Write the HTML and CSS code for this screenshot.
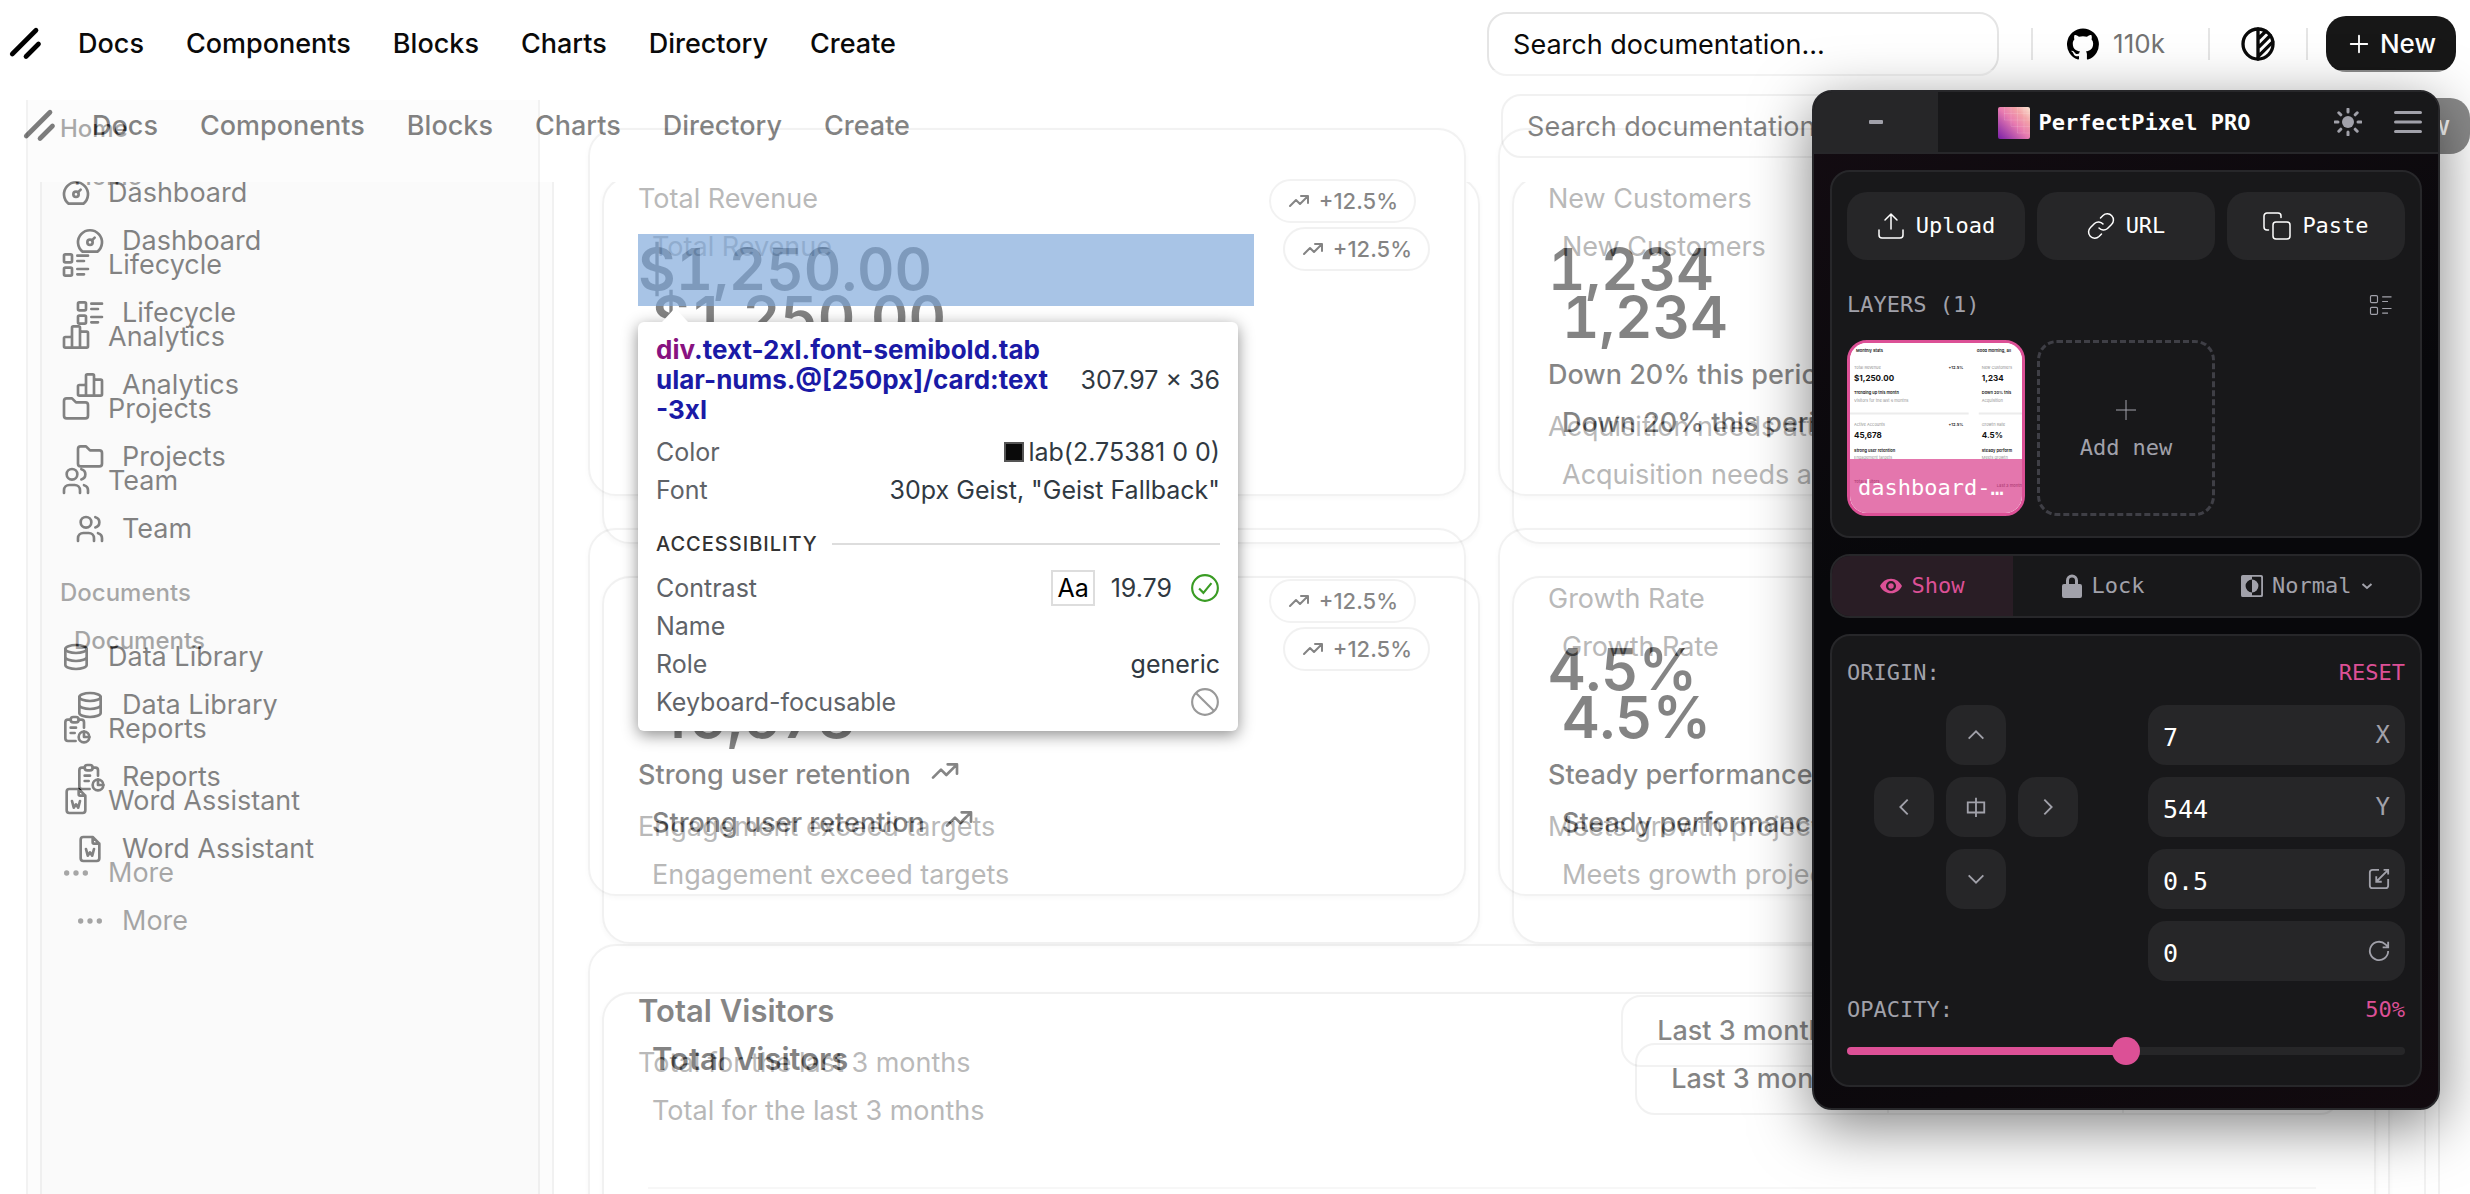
FILE: index.html
```
<!DOCTYPE html>
<html lang="en">

<head>
  <meta charset="UTF-8" />
  <meta name="viewport" content="width=device-width, initial-scale=1.0" />
  <title>PerfectPixel PRO - Dashboard</title>
  <link rel="stylesheet" href="styles.css">
</head>

<body>
  <!-- shared icons -->
  <svg class="sprite" aria-hidden="true">
    <symbol id="i-trend" viewBox="0 0 24 24">
      <path d="M3 17l6-6 4 4 8-8M14 7h7v7" />
    </symbol>
    <symbol id="i-down" viewBox="0 0 24 24">
      <path d="M3 7l6 6 4-4 8 8M21 10v7h-7" />
    </symbol>
    <symbol id="i-list" viewBox="0 0 24 24">
      <path d="M13 5h8M13 9h5M13 15h8M13 19h5" />
      <rect x="3" y="4" width="6" height="6" rx="1" />
      <rect x="3" y="14" width="6" height="6" rx="1" />
    </symbol>
    <symbol id="i-chevron" viewBox="0 0 24 24">
      <path d="M4 16l8-8 8 8" />
    </symbol>
  </svg>

  <div class="page" id="page">
    <header class="site-header">
      <a class="logo" href="#" aria-label="Home page">
        <svg viewBox="0 0 256 256">
          <path d="M208 128L128 208M192 40L40 192" />
        </svg>
      </a>
      <nav class="site-nav">
        <a href="#">Docs</a>
        <a href="#">Components</a>
        <a href="#">Blocks</a>
        <a href="#">Charts</a>
        <a href="#">Directory</a>
        <a href="#">Create</a>
      </nav>
      <input class="search" type="search" aria-label="Search documentation" placeholder="Search documentation..." />
      <span class="divider"></span>
      <a class="github" href="#">
        <svg viewBox="0 0 24 24">
          <path d="M12 .3a12 12 0 0 0-3.8 23.38c.6.12.83-.26.83-.57L9 21.07c-3.34.72-4.04-1.61-4.04-1.61-.55-1.39-1.34-1.76-1.34-1.76-1.08-.74.09-.73.09-.73 1.2.09 1.83 1.24 1.83 1.24 1.08 1.83 2.81 1.3 3.5 1 .1-.78.42-1.31.76-1.61-2.67-.3-5.47-1.33-5.47-5.93 0-1.31.47-2.38 1.24-3.22-.14-.3-.54-1.52.1-3.18 0 0 1-.32 3.3 1.23a11.5 11.5 0 0 1 6 0c2.28-1.55 3.29-1.23 3.29-1.23.64 1.66.24 2.88.12 3.18a4.65 4.65 0 0 1 1.23 3.22c0 4.61-2.8 5.63-5.48 5.92.42.36.81 1.1.81 2.22l-.01 3.29c0 .31.2.69.82.57A12 12 0 0 0 12 .3" />
        </svg>
        110k
      </a>
      <span class="divider"></span>
      <button class="theme" type="button" aria-label="Toggle theme">
        <svg class="icon" viewBox="0 0 24 24">
          <circle cx="12" cy="12" r="9" />
          <path d="M12 3v18M12 9l4.65-4.65M12 14.3l7.37-7.37M12 19.6l8.85-8.85" />
        </svg>
      </button>
      <span class="divider"></span>
      <button class="new-button" type="button">
        <svg class="icon" viewBox="0 0 24 24">
          <path d="M12 3v18M3 12h18" />
        </svg>
        New
      </button>
    </header>

    <div class="viewport">
      <div class="shell">
        <aside class="sidebar">
          <div class="group">
            <h2 class="group-label">Home</h2>
            <ul class="menu">
              <li><a href="#"><svg class="icon" viewBox="0 0 24 24">
                <circle cx="12" cy="13" r="2" />
                <path d="M13.45 11.55l2.05-2.05M6.4 20a9 9 0 1 1 11.2 0z" />
              </svg>Dashboard</a></li>
              <li><a href="#"><svg class="icon"><use href="#i-list" /></svg>Lifecycle</a></li>
              <li><a href="#"><svg class="icon" viewBox="0 0 24 24">
                <path d="M4 20h16M3 13a1 1 0 0 1 1-1h4a1 1 0 0 1 1 1v7H4a1 1 0 0 1-1-1zM9 20V5a1 1 0 0 1 1-1h4a1 1 0 0 1 1 1v15M15 9a1 1 0 0 1 1-1h4a1 1 0 0 1 1 1v10a1 1 0 0 1-1 1" />
              </svg>Analytics</a></li>
              <li><a href="#"><svg class="icon" viewBox="0 0 24 24">
                <path d="M5 4h4l3 3h7a2 2 0 0 1 2 2v8a2 2 0 0 1-2 2H5a2 2 0 0 1-2-2V6a2 2 0 0 1 2-2" />
              </svg>Projects</a></li>
              <li><a href="#"><svg class="icon" viewBox="0 0 24 24">
                <circle cx="9" cy="7" r="4" />
                <path d="M3 21v-2a4 4 0 0 1 4-4h4a4 4 0 0 1 4 4v2M16 3.13a4 4 0 0 1 0 7.75M21 21v-2a4 4 0 0 0-3-3.85" />
              </svg>Team</a></li>
            </ul>
          </div>
          <div class="group">
            <h2 class="group-label">Documents</h2>
            <ul class="menu">
              <li><a href="#"><svg class="icon" viewBox="0 0 24 24">
                <ellipse cx="12" cy="6" rx="8" ry="3" />
                <path d="M4 6v6c0 1.66 3.58 3 8 3s8-1.34 8-3V6M4 12v6c0 1.66 3.58 3 8 3s8-1.34 8-3v-6" />
              </svg>Data Library</a></li>
              <li><a href="#"><svg class="icon" viewBox="0 0 24 24">
                <path d="M8 5H6a2 2 0 0 0-2 2v12a2 2 0 0 0 2 2h5.7M18 14v4h4M18 11V7a2 2 0 0 0-2-2h-2M8 11h4M8 15h3" />
                <rect x="8" y="3" width="6" height="4" rx="2" />
                <circle cx="18" cy="18" r="4" />
              </svg>Reports</a></li>
              <li><a href="#"><svg class="icon" viewBox="0 0 24 24">
                <path d="M14 3v4a1 1 0 0 0 1 1h4M17 21H7a2 2 0 0 1-2-2V5a2 2 0 0 1 2-2h7l5 5v11a2 2 0 0 1-2 2zM9 12l1.33 5L12 14.5l1.67 2.5L15 12" />
              </svg>Word Assistant</a></li>
              <li class="more"><a href="#"><svg class="icon" viewBox="0 0 24 24">
                <circle cx="5" cy="12" r="1" /><circle cx="12" cy="12" r="1" /><circle cx="19" cy="12" r="1" />
              </svg>More</a></li>
            </ul>
          </div>
        </aside>

        <main class="main">
          <section class="cards">
            <article class="card stat">
              <h3 class="muted">Total Revenue</h3>
              <div class="value">$1,250.00</div>
              <span class="badge"><svg class="icon"><use href="#i-trend" /></svg>+12.5%</span>
            </article>
            <article class="card stat">
              <h3 class="muted">New Customers</h3>
              <div class="value">1,234</div>
              <footer>
                <p class="strong">Down 20% this period <svg class="icon"><use href="#i-down" /></svg></p>
                <p class="muted">Acquisition needs attention</p>
              </footer>
            </article>
            <article class="card stat">
              <h3 class="muted">Active Accounts</h3>
              <div class="value">45,678</div>
              <span class="badge"><svg class="icon"><use href="#i-trend" /></svg>+12.5%</span>
              <footer>
                <p class="strong">Strong user retention <svg class="icon"><use href="#i-trend" /></svg></p>
                <p class="muted">Engagement exceed targets</p>
              </footer>
            </article>
            <article class="card stat">
              <h3 class="muted">Growth Rate</h3>
              <div class="value">4.5%</div>
              <footer>
                <p class="strong">Steady performance increase <svg class="icon"><use href="#i-trend" /></svg></p>
                <p class="muted">Meets growth projections</p>
              </footer>
            </article>
          </section>

          <section class="card visitors">
            <div class="visitors-head">
              <div>
                <h3>Total Visitors</h3>
                <p class="muted">Total for the last 3 months</p>
              </div>
              <div class="ranges">
                <button type="button">Last 3 months</button>
                <button type="button">Last 30 days</button>
                <button type="button">Last 7 days</button>
              </div>
            </div>
            <div class="chart"></div>
          </section>
        </main>
      </div>
    </div>
  </div>

  <!-- the layer being compared, filled by app.js -->
  <div class="ghost" id="ghost"></div>

  <!-- element inspector -->
  <div class="highlight"></div>
  <div class="inspector">
    <div class="inspector-head">
      <strong><em>div</em>.text-2xl.font-semibold.tab<br>ular-nums.@[250px]/card:text<br>-3xl</strong>
      <span>307.97 × 36</span>
    </div>
    <dl>
      <div><dt>Color</dt><dd><i class="swatch"></i>lab(2.75381 0 0)</dd></div>
      <div><dt>Font</dt><dd>30px Geist, "Geist Fallback"</dd></div>
    </dl>
    <h4>ACCESSIBILITY</h4>
    <dl>
      <div><dt>Contrast</dt><dd><span class="sample">Aa</span>19.79<svg class="ok" viewBox="0 0 28 28">
        <circle cx="14" cy="14" r="12" />
        <path d="M8.500 14.500l4 4 7.500-9" />
      </svg></dd></div>
      <div><dt>Name</dt><dd></dd></div>
      <div><dt>Role</dt><dd>generic</dd></div>
      <div><dt>Keyboard-focusable</dt><dd><svg class="no" viewBox="0 0 28 28">
        <circle cx="14" cy="14" r="12" />
        <path d="M5.500 5.500l17 17" />
      </svg></dd></div>
    </dl>
  </div>

  <!-- floating panel -->
  <section class="panel">
    <header class="panel-header">
      <button class="minimize" type="button" aria-label="Minimize"></button>
      <h1>
        <svg class="brand" viewBox="0 0 32 32">
          <defs>
            <linearGradient id="brandFill" x1="0" y1="1" x2="1" y2="0">
              <stop offset="0" stop-color="#7a1fa8" />
              <stop offset=".5" stop-color="#e87bb0" />
              <stop offset=".75" stop-color="#f3a3a8" />
              <stop offset="1" stop-color="#fbe6d4" />
            </linearGradient>
          </defs>
          <rect width="32" height="32" rx="2" fill="url(#brandFill)" />
          <path d="M6.500 0v13M13 0v19M19.500 0v26M26 0v26M6 6.500h26M6 13h26M13 19.500h19M19 26h13" stroke="#fff" stroke-opacity=".12" />
        </svg>
        PerfectPixel PRO
      </h1>
      <button class="panel-icon" type="button" aria-label="Theme">
        <svg class="sun" viewBox="0 0 28 28">
          <circle cx="14" cy="14" r="6" />
          <path d="M14 1v3M14 24v3M1 14h3M24 14h3M4.800 4.800l2 2M21.200 21.200l2 2M23.200 4.800l-2 2M6.800 21.200l-2 2" />
        </svg>
      </button>
      <button class="panel-icon" type="button" aria-label="Menu">
        <svg class="bars" viewBox="0 0 28 28">
          <path d="M1.500 4.500h25M1.500 14h25M1.500 23.500h25" />
        </svg>
      </button>
    </header>

    <div class="panel-body">
      <div class="box layers">
        <div class="sources">
          <button type="button"><svg class="thin" viewBox="0 0 28 28">
            <path d="M14 17V2M8 8l6-6 6 6M2 18v5a3 3 0 0 0 3 3h18a3 3 0 0 0 3-3v-5" />
          </svg>Upload</button>
          <button type="button"><svg class="thin" viewBox="0 0 28 28">
            <path d="M12 16a6 6 0 0 0 8.500.5l4-4a6 6 0 0 0-8.500-9L13.500 6M16 12a6 6 0 0 0-8.500-.5l-4 4a6 6 0 0 0 8.500 9l2.500-2.500" />
          </svg>URL</button>
          <button type="button"><svg class="thin" viewBox="0 0 28 28">
            <rect x="10" y="10" width="17" height="17" rx="3" />
            <path d="M5.500 18H4a3 3 0 0 1-3-3V4a3 3 0 0 1 3-3h11a3 3 0 0 1 3 3v1.500" />
          </svg>Paste</button>
        </div>
        <div class="row">
          <h2>LAYERS (1)</h2>
          <button class="view" type="button" aria-label="List view"><svg><use href="#i-list" /></svg></button>
        </div>
        <div class="tiles">
          <button class="tile active" type="button">
            <svg class="preview" viewBox="0 0 171 170">
              <rect width="171" height="170" fill="#fff" />
              <g class="tiny">
                <text x="6" y="9">Monthly Stats</text>
                <text x="126" y="9">Good morning, all</text>
              </g>
              <g class="faint">
                <text x="4" y="26">Total Revenue</text>
                <text x="131" y="26">New Customers</text>
                <text x="4" y="59">Visitors for the last 6 months</text>
                <text x="131" y="59">Acquisition</text>
                <text x="4" y="83">Active Accounts</text>
                <text x="131" y="83">Growth Rate</text>
                <text x="4" y="115">Engagement targets</text>
                <text x="131" y="115">Meets growth</text>
              </g>
              <g class="big">
                <text x="4" y="38">$1,250.00</text>
                <text x="131" y="38">1,234</text>
                <text x="4" y="94">45,678</text>
                <text x="131" y="94">4.5%</text>
              </g>
              <g class="tiny">
                <text x="4" y="51">Trending up this month</text>
                <text x="131" y="51">Down 20% this</text>
                <text x="4" y="108">Strong user retention</text>
                <text x="131" y="108">Steady perform</text>
                <text x="98" y="26">+12.5%</text>
                <text x="98" y="83">+12.5%</text>
                <text x="4" y="139">Total Visitors</text>
                <text x="146" y="143">Last 3 months</text>
              </g>
              <path d="M0 70h118M128 70h43" stroke="#ececec" stroke-width="2" />
            </svg>
            <span>dashboard-01.png</span>
          </button>
          <button class="tile add" type="button">
            <svg viewBox="0 0 20 20"><path d="M10 0v20M0 10h20" /></svg>
            Add new
          </button>
        </div>
      </div>

      <div class="box tabs">
        <button class="on" type="button"><svg class="eye" viewBox="0 0 24 24">
          <path fill-rule="evenodd" d="M12 4C6.500 4 2.300 7.400 0 12c2.300 4.600 6.500 8 12 8s9.700-3.400 12-8c-2.300-4.600-6.500-8-12-8zm0 13.500a5.500 5.500 0 1 1 0-11 5.500 5.500 0 0 1 0 11z" />
          <circle cx="12" cy="12" r="3" />
        </svg>Show</button>
        <button type="button"><svg class="lock" viewBox="0 0 20 24">
          <path fill-rule="evenodd" d="M4 10V6.500a6 6 0 0 1 12 0V10h2a2 2 0 0 1 2 2v10a2 2 0 0 1-2 2H2a2 2 0 0 1-2-2V12a2 2 0 0 1 2-2zm3 0h6V6.500a3 3 0 0 0-6 0z" />
        </svg>Lock</button>
        <label class="blend">
          <svg class="mode" viewBox="0 0 24 24">
            <path fill-rule="evenodd" d="M2 0h20a2 2 0 0 1 2 2v20a2 2 0 0 1-2 2H2a2 2 0 0 1-2-2V2a2 2 0 0 1 2-2zM12 2v3a7 7 0 0 0 0 14v3h9a1 1 0 0 0 1-1V3a1 1 0 0 0-1-1z" />
            <path d="M12 5a7 7 0 0 1 0 14z" />
          </svg>
          <select aria-label="Blend mode">
            <option>Normal</option>
            <option>Screen</option>
          </select>
          <svg class="caret" viewBox="0 0 12 8"><path d="M1.500 2L6 6l4.500-4" /></svg>
        </label>
      </div>

      <div class="box origin">
        <div class="row">
          <h2>ORIGIN:</h2>
          <button class="reset" type="button">RESET</button>
        </div>
        <div class="position">
          <div class="pad">
            <button class="up" type="button" aria-label="Up"><svg><use href="#i-chevron" /></svg></button>
            <button class="left" type="button" aria-label="Left"><svg><use href="#i-chevron" /></svg></button>
            <button class="center" type="button" aria-label="Center"><svg viewBox="0 0 24 24"><path d="M3 7h18v11H3zM12 2v21" /></svg></button>
            <button class="right" type="button" aria-label="Right"><svg><use href="#i-chevron" /></svg></button>
            <button class="down" type="button" aria-label="Down"><svg><use href="#i-chevron" /></svg></button>
          </div>
          <div class="fields">
            <label><input type="text" value="7" /><span>X</span></label>
            <label><input type="text" value="544" /><span>Y</span></label>
            <label><input type="text" value="0.5" aria-label="Scale" /><svg viewBox="0 0 24 24">
              <path d="M12 2H5a3 3 0 0 0-3 3v14a3 3 0 0 0 3 3h14a3 3 0 0 0 3-3v-7M22 2L9 15M9 9v6h6M17 2h5v5" />
            </svg></label>
            <label><input type="text" value="0" aria-label="Rotation" /><svg viewBox="0 0 24 24">
              <path d="M22 12a10 10 0 1 1-3-7.200l3 2.700M22 2v6h-6" />
            </svg></label>
          </div>
        </div>
        <div class="row opacity-row">
          <label for="opacity">OPACITY:</label>
          <output for="opacity">50%</output>
        </div>
        <input class="slider" id="opacity" type="range" min="0" max="100" value="50" />
      </div>
    </div>
  </section>

  <script src="app.js"></script>
</body>

</html>
```
FILE: styles.css
```
:root {
  --fg: #0a0a0a;
  --muted: #737373;
  --line: #e5e5e5;
  --pink: #dc5096;
  --zinc: #a1a1aa;
  --raised: #262628;
  --header: 100px;
  --scroll: -20px;
}

* {
  box-sizing: border-box;
}

body {
  margin: 0;
  height: 100vh;
  overflow: hidden;
  position: relative;
  background: #fff;
  color: var(--fg);
  font-family: Inter, 'Liberation Sans', sans-serif;
  font-size: 28px;
  line-height: 40px;
}

h1, h2, h3, h4, p, ul, dl, dd {
  margin: 0;
  padding: 0;
  font: inherit;
}

ul {
  list-style: none;
}

a {
  color: inherit;
  text-decoration: none;
}

button, input, select {
  font: inherit;
  color: inherit;
  margin: 0;
  padding: 0;
  border: 0;
  background: none;
}

svg {
  flex: none;
  fill: none;
}

.sprite {
  position: absolute;
  width: 0;
  height: 0;
}

.icon {
  width: 32px;
  height: 32px;
  stroke: currentColor;
  stroke-width: 2;
  stroke-linecap: round;
  stroke-linejoin: round;
}

/* page */
.page {
  height: 100%;
  display: flex;
  flex-direction: column;
  background: #fff;
}

.ghost {
  position: absolute;
  top: 70px;
  bottom: 0;
  left: 14px;
  width: 100%;
  opacity: 0.5;
}

.ghost .page {
  --header: 112px;
  --scroll: -54px;
}

.site-header {
  flex: none;
  height: var(--header);
  padding: 0 14px calc(112px - var(--header)) 6px;
  display: flex;
  align-items: center;
}

.logo svg {
  display: block;
  width: 40px;
  height: 40px;
  stroke: #000;
  stroke-width: 30;
  stroke-linecap: round;
}

.site-nav {
  margin-left: 32px;
  display: flex;
  gap: 42px;
  font-size: 27px;
  font-weight: 500;
}

.search {
  width: 512px;
  height: 64px;
  margin-left: auto;
  padding: 0 24px;
  border: 2px solid var(--line);
  border-radius: 20px;
  font-size: 27px;
}

.search::placeholder {
  color: var(--fg);
  opacity: 1;
}

.divider {
  width: 2px;
  height: 32px;
  margin-left: 32px;
  background: var(--line);
}

.github {
  margin-left: 34px;
  display: flex;
  align-items: center;
  gap: 14px;
  font-size: 26px;
  color: var(--muted);
}

.github svg {
  width: 32px;
  height: 32px;
  fill: #000;
}

.github + .divider {
  margin-left: 43px;
}

.theme {
  margin-left: 28px;
}

.theme .icon {
  display: block;
  width: 40px;
  height: 40px;
}

.theme + .divider {
  margin-left: 28px;
}

.new-button {
  height: 56px;
  margin-left: 18px;
  padding: 0 20px 0 22px;
  display: flex;
  align-items: center;
  gap: 10px;
  border-radius: 20px;
  background: #171717;
  color: #fff;
  font-size: 26px;
  font-weight: 500;
}

.new-button .icon {
  width: 22px;
  height: 22px;
}

.viewport {
  flex: 1;
  min-height: 0;
  overflow: hidden;
}

.shell {
  min-height: 110vh;
  margin: var(--scroll) 44px 0 26px;
  display: flex;
  border: solid var(--line);
  border-width: 0 2px;
}

.sidebar {
  flex: none;
  width: 512px;
  padding: 17px 16px;
  border-right: 2px solid var(--line);
  background: #fafafa;
}

.group {
  margin-bottom: 48px;
}

.group-label {
  padding: 0 16px;
  line-height: 64px;
  font-size: 24px;
  font-weight: 500;
  opacity: 0.7;
}

.menu {
  display: flex;
  flex-direction: column;
  gap: 8px;
}

.menu a {
  height: 64px;
  padding: 0 16px;
  display: flex;
  align-items: center;
  gap: 16px;
  font-size: 27px;
}

.more {
  opacity: 0.7;
}

.main {
  flex: 1;
  min-width: 0;
  padding: 48px;
}

.cards {
  display: grid;
  grid-template-columns: 1fr 1fr;
  grid-auto-rows: 368px;
  gap: 32px;
}

.card {
  padding: 49px 48px 47px;
  border: 2px solid var(--line);
  border-radius: 28px;
  box-shadow: 0 2px 4px rgba(0, 0, 0, 0.05);
}

.muted {
  color: var(--muted);
}

.stat {
  display: grid;
  grid-template-columns: 1fr auto;
  align-content: start;
  column-gap: 16px;
}

.value {
  grid-column: 1;
  margin: 14px 0 50px;
  font-size: 58px;
  line-height: 72px;
  font-weight: 600;
  font-variant-numeric: tabular-nums;
}

.badge {
  grid-column: 2;
  grid-row: 1 / 3;
  align-self: start;
  padding: 4px 16px;
  display: flex;
  align-items: center;
  gap: 8px;
  border: 2px solid var(--line);
  border-radius: 22px;
  font-size: 22px;
  line-height: 32px;
  font-weight: 500;
}

.badge .icon {
  width: 24px;
  height: 24px;
}

.stat footer {
  grid-column: 1 / 3;
  display: flex;
  flex-direction: column;
  gap: 12px;
}

.strong {
  display: flex;
  gap: 18px;
  font-size: 27px;
  font-weight: 500;
}

.stat .muted {
  font-size: 27px;
}

.visitors {
  margin-top: 48px;
}

.visitors-head {
  display: flex;
  justify-content: space-between;
}

.visitors h3 {
  margin-bottom: 16px;
  font-size: 31px;
  line-height: 32px;
  font-weight: 600;
}

.visitors .muted {
  font-size: 27px;
}

.ranges {
  height: 72px;
  display: flex;
  border: 2px solid var(--line);
  border-radius: 20px;
  font-size: 27px;
  font-weight: 500;
}

.ranges button {
  padding: 0 34px;
}

.ranges button + button {
  border-left: 2px solid var(--line);
}

.chart {
  height: 480px;
  margin: 104px 10px 0;
  border-top: 2px solid #f0f0f0;
}

/* inspector */
.highlight {
  position: absolute;
  top: 234px;
  left: 638px;
  width: 616px;
  height: 72px;
  background: rgba(123, 166, 217, 0.66);
}

.inspector {
  position: absolute;
  top: 322px;
  left: 638px;
  width: 600px;
  padding: 13px 18px 10px;
  border-radius: 6px;
  background: #fff;
  box-shadow: 0 4px 16px rgba(0, 0, 0, 0.45);
  color: #303942;
  font-size: 25px;
  line-height: 38px;
}

.inspector::before {
  content: '';
  position: absolute;
  top: -14px;
  left: 24px;
  border: solid transparent;
  border-width: 0 13px 14px;
  border-bottom-color: #fff;
}

.inspector-head {
  display: flex;
  align-items: center;
  justify-content: space-between;
  margin-bottom: 8px;
  line-height: 30px;
}

.inspector-head strong {
  color: #1a1aa6;
  font-size: 26px;
}

.inspector-head em {
  color: #881280;
  font-style: normal;
}

.inspector dl div {
  display: flex;
  justify-content: space-between;
}

.inspector dt {
  color: #5f6368;
}

.inspector dd {
  display: flex;
  align-items: center;
}

.inspector h4 {
  margin: 16px 0 6px;
  display: flex;
  align-items: center;
  gap: 14px;
  color: #333;
  font-size: 20px;
  font-weight: 500;
  letter-spacing: 1px;
}

.inspector h4::after {
  content: '';
  flex: 1;
  height: 2px;
  background: #ddd;
}

.swatch {
  width: 20px;
  height: 20px;
  margin-right: 4px;
  border: 2px solid #555;
  background: #0a0a0a;
}

.sample {
  margin-right: 16px;
  padding: 0 4px;
  border: 2px solid #ddd;
  line-height: 32px;
  color: #000;
}

.inspector svg {
  width: 30px;
  height: 30px;
  stroke: #999;
  stroke-width: 2;
}

.inspector .ok {
  margin-left: 18px;
  stroke: #3a9c24;
}

/* panel */
.panel {
  position: absolute;
  top: 90px;
  right: 30px;
  width: 628px;
  overflow: hidden;
  border: 2px solid #27272a;
  border-radius: 20px;
  background: linear-gradient(160deg, #140c12, #08080b 40%, #08080b 70%, #120a0f);
  box-shadow: 0 16px 60px rgba(0, 0, 0, 0.5);
  color: var(--zinc);
  font-family: 'DejaVu Sans Mono', monospace;
  font-size: 22px;
  line-height: 32px;
}

.panel-header {
  height: 62px;
  padding-right: 16px;
  display: flex;
  align-items: center;
  border-bottom: 2px solid #27272a;
  background: #18181a;
}

.minimize {
  align-self: stretch;
  width: 124px;
  display: grid;
  place-items: center;
  background: var(--raised);
}

.minimize::before {
  content: '';
  width: 14px;
  height: 4px;
  border-radius: 1px;
  background: var(--zinc);
}

.panel-header h1 {
  flex: 1;
  padding: 2px 24px 0 0;
  display: flex;
  align-items: center;
  justify-content: center;
  gap: 9px;
  color: #fff;
  font-weight: bold;
}

.brand {
  width: 32px;
  height: 32px;
}

.panel-icon + .panel-icon {
  margin-left: 32px;
}

.panel-icon svg {
  display: block;
  width: 28px;
  height: 28px;
  stroke: var(--zinc);
  stroke-width: 3;
  stroke-linecap: round;
}

.sun circle {
  fill: var(--zinc);
  stroke: none;
}

.panel-body {
  padding: 16px 16px 21px;
  display: flex;
  flex-direction: column;
  gap: 16px;
}

.box {
  border: 2px solid #27272a;
  border-radius: 20px;
  background: #18181a;
}

.layers {
  padding: 20px 15px;
}

.sources,
.tiles {
  display: grid;
  grid-template-columns: repeat(3, 1fr);
  gap: 12px;
}

.sources button {
  height: 68px;
  display: flex;
  align-items: center;
  justify-content: center;
  gap: 11px;
  border-radius: 20px;
  background: var(--raised);
  color: #fff;
}

.thin {
  width: 28px;
  height: 28px;
  stroke: #fff;
  stroke-width: 1.5;
  stroke-linecap: round;
}

.row {
  display: flex;
  align-items: center;
  justify-content: space-between;
}

.layers .row {
  padding: 29px 10px 19px 0;
}

.view svg {
  display: block;
  width: 28px;
  height: 28px;
  stroke: var(--zinc);
  stroke-width: 1;
}

.tile {
  position: relative;
  height: 176px;
  overflow: hidden;
  border-radius: 20px;
}

.tile.active {
  border: 3px solid var(--pink);
  background: #fff;
}

.preview {
  display: block;
  width: 100%;
  font-family: Inter, sans-serif;
}

.preview text {
  fill: #111;
}

.preview .big {
  font-size: 8px;
  font-weight: 700;
}

.preview .tiny {
  font-size: 4px;
  font-weight: 600;
}

.preview .faint {
  font-size: 4px;
  opacity: 0.5;
}

.tile span {
  position: absolute;
  right: 0;
  bottom: 0;
  left: 0;
  padding: 13px 8px 9px;
  overflow: hidden;
  background: rgba(220, 80, 150, 0.78);
  color: #fff;
  text-align: left;
  text-overflow: ellipsis;
  white-space: nowrap;
}

.tile.add {
  display: flex;
  flex-direction: column;
  align-items: center;
  justify-content: center;
  gap: 12px;
  border: 3px dashed #3f3f46;
}

.add svg {
  width: 20px;
  height: 20px;
  margin-top: 8px;
  stroke: var(--zinc);
}

.tabs {
  height: 64px;
  display: grid;
  grid-template-columns: 4fr 4fr 5fr;
  overflow: hidden;
}

.tabs > * {
  display: flex;
  align-items: center;
  justify-content: center;
  gap: 9px;
}

.tabs svg {
  fill: currentColor;
}

.tabs .on {
  background: #291d25;
  color: var(--pink);
}

.eye,
.mode {
  width: 22px;
  height: 22px;
}

.lock {
  width: 20px;
  height: 24px;
}

.blend select {
  appearance: none;
}

.tabs .caret {
  width: 12px;
  height: 8px;
  fill: none;
  stroke: currentColor;
  stroke-width: 2;
}

.origin {
  padding: 21px 15px 20px;
}

.reset,
.opacity-row output {
  color: var(--pink);
}

.position {
  margin: 16px 0 13px;
  display: flex;
  justify-content: space-between;
}

.pad {
  padding-left: 27px;
  display: grid;
  grid-template-columns: repeat(3, 60px);
  grid-auto-rows: 60px;
  gap: 12px;
  grid-template-areas: '. up .' 'left center right' '. down .';
}

.pad button {
  display: grid;
  place-items: center;
  border-radius: 18px;
  background: var(--raised);
}

.pad svg {
  width: 22px;
  height: 22px;
  stroke: var(--zinc);
  stroke-width: 2;
}

.up { grid-area: up; }
.left { grid-area: left; }
.center { grid-area: center; }
.right { grid-area: right; }
.down { grid-area: down; }

.left svg { transform: rotate(-90deg); }
.right svg { transform: rotate(90deg); }
.down svg { transform: rotate(180deg); }

.fields {
  width: 257px;
  display: flex;
  flex-direction: column;
  gap: 12px;
}

.fields label {
  height: 60px;
  padding: 0 15px;
  display: flex;
  align-items: center;
  border-radius: 18px;
  background: var(--raised);
}

.fields input {
  flex: 1;
  min-width: 0;
  padding-top: 6px;
  color: #fff;
  font-size: 25px;
}

.fields span {
  font-size: 24px;
}

.fields svg {
  width: 22px;
  height: 22px;
  stroke: var(--zinc);
  stroke-width: 2;
}

.slider {
  display: block;
  width: 100%;
  height: 28px;
  margin-top: 11px;
  appearance: none;
}

.slider::-webkit-slider-runnable-track {
  height: 8px;
  border-radius: 4px;
  background: linear-gradient(to right, var(--pink) 50%, var(--raised) 50%);
}

.slider::-webkit-slider-thumb {
  appearance: none;
  width: 28px;
  height: 28px;
  margin-top: -10px;
  border-radius: 50%;
  background: var(--pink);
}
```
FILE: app.js
```
// draw the page a second time as the half transparent layer
const page = document.getElementById('page');
const ghost = document.getElementById('ghost');
const copy = page.cloneNode(true);

copy.removeAttribute('id');
ghost.appendChild(copy);

const slider = document.getElementById('opacity');
const output = document.querySelector('output[for="opacity"]');

slider.addEventListener('input', function () {
  ghost.style.opacity = this.value / 100;
  output.textContent = this.value + '%';
});
```
